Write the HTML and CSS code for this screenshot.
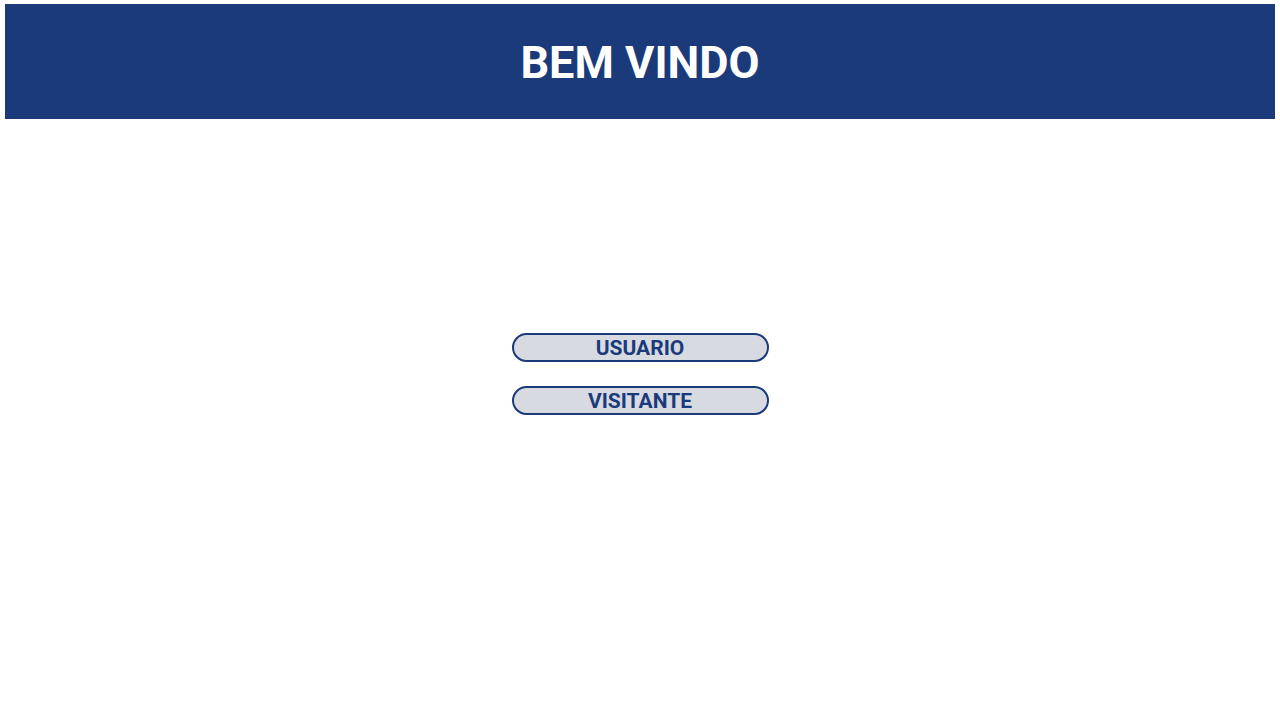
FILE: index.html
```html
<!DOCTYPE html>
<html lang="pt">
<head>
<meta charset="utf-8">
<title>Bem vindo</title>
<link rel="stylesheet" href="styles.css">
</head>
<body>
<header class="header">
  <h1 class="title">BEM VINDO</h1>
</header>
<main class="actions">
  <button class="btn" type="button">USUARIO</button>
  <button class="btn" type="button">VISITANTE</button>
</main>
</body>
</html>
```
FILE: styles.css
```css
html, body {
  margin: 0;
  background: #ffffff;
}
body {
  padding: 4px 5px 0 5px;
  font-family: Roboto, "Liberation Sans", sans-serif;
}
.header {
  background: #1a3a7a;
  height: 115px;
  display: flex;
  align-items: center;
  justify-content: center;
}
.title {
  margin: 0;
  color: #ffffff;
  font-size: 45px;
  font-weight: 700;
  line-height: 1;
  padding-top: 2px;
}
.actions {
  display: flex;
  flex-direction: column;
  align-items: center;
  gap: 24px;
  margin-top: 214px;
}
.btn {
  box-sizing: border-box;
  width: 257px;
  height: 29px;
  border: 2px solid #1a3a7a;
  border-radius: 15px;
  background: #d8dae2;
  color: #1a3a7a;
  font-family: Roboto, "Liberation Sans", sans-serif;
  font-weight: 700;
  font-size: 21px;
  line-height: 1;
  padding: 2px 0 0 0;
  display: flex;
  align-items: center;
  justify-content: center;
}
```
